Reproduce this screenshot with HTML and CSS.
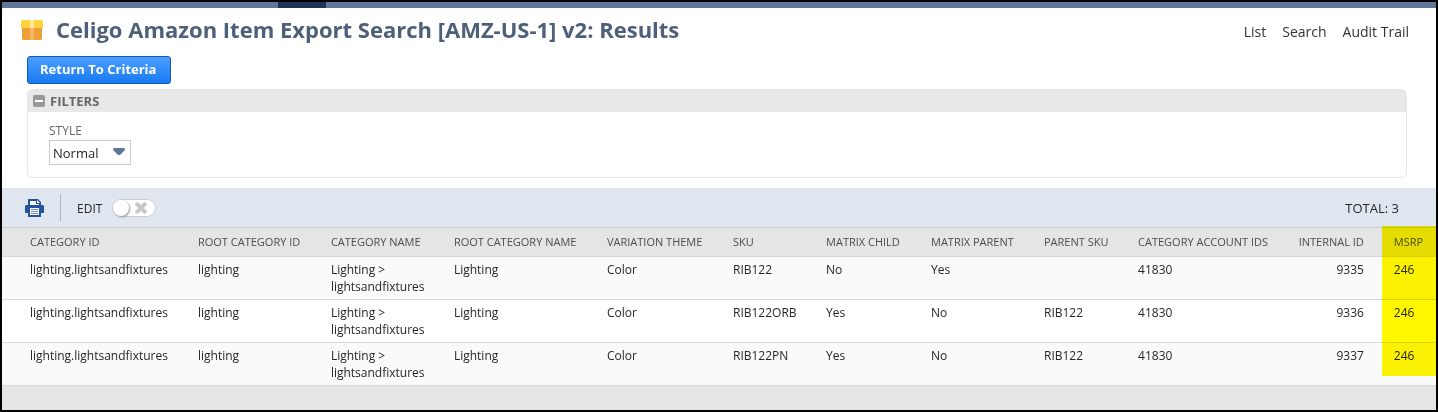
FILE: index.html
```html
<!DOCTYPE html>
<html lang="en">
<head>
<meta charset="utf-8">
<title>Celigo Amazon Item Export Search: Results</title>
<link rel="stylesheet" href="styles.css">
</head>
<body>
<div class="page">
  <div class="navbar"><div class="navbar-active"></div></div>
  <header class="page-header">
    <svg class="box-icon" width="22" height="20" viewBox="0 0 22 20" aria-hidden="true">
      <path d="M1 8h20v11l-1 1H2l-1-1z" fill="#ee9f37"/>
      <path d="M1 0h20l1 1v7H0V1z" fill="#ffd23e"/>
      <path d="M9 0h4v8H9z" fill="#ffe794"/>
      <path d="M9 8h4v12H9z" fill="#f3b766"/>
    </svg>
    <h1 class="title">Celigo Amazon Item Export Search [AMZ-US-1] v2: Results</h1>
    <nav class="links">
      <a href="#list">List</a>
      <a href="#search">Search</a>
      <a href="#audit">Audit Trail</a>
    </nav>
  </header>
  <div class="actions"><button class="primary" type="button">Return To Criteria</button></div>
  <section class="filters">
    <button class="filters-head" type="button" aria-expanded="true">
      <svg width="12" height="12" viewBox="0 0 12 12" aria-hidden="true"><rect width="12" height="12" rx="2" fill="#999"/><path d="M2 5h8v2H2z" fill="#fff"/></svg>
      FILTERS
    </button>
    <div class="filters-body">
      <label class="field-label" for="style">STYLE</label>
      <div class="select-wrap">
        <select id="style" class="select"><option>Normal</option></select>
        <svg class="select-arrow" width="12" height="8" viewBox="0 0 12 8" aria-hidden="true"><path d="M1 0h10l1 1v1L7 7H5L0 2V1z" fill="#607799"/></svg>
      </div>
    </div>
  </section>
  <div class="toolbar">
    <button class="print" type="button" aria-label="Print">
      <svg width="19" height="18" viewBox="0 0 19 18" aria-hidden="true">
        <path d="M3 0h10l3 3v3h2l1 1v7h-3v4H3v-4H0V7l1-1h2z" fill="#24559c"/>
        <path d="M5 2h6v3h3v1H5zM5 9h9v7H5z" fill="#fff"/>
        <path d="M12 1l3 3h-3z" fill="#fff"/>
        <path d="M6 10h7v1H6zM6 12h7v1H6zM6 14h7v1H6z" fill="#6d8fc0"/>
      </svg>
    </button>
    <div class="divider"></div>
    <label class="edit-label" for="edit">EDIT</label>
    <div class="toggle-wrap">
      <input id="edit" class="toggle" type="checkbox">
      <svg class="toggle-x" width="12" height="12" viewBox="0 0 12 12" aria-hidden="true"><path d="M1 1l10 10M11 1L1 11" stroke="#c8c8c8" stroke-width="4"/></svg>
    </div>
    <div class="total">TOTAL: 3</div>
  </div>
  <div class="results">
    <table class="grid">
      <colgroup>
        <col class="c-id"><col class="c-root"><col class="c-name"><col class="c-rootname"><col class="c-theme"><col class="c-sku"><col class="c-child"><col class="c-parent"><col class="c-psku"><col class="c-acct"><col class="c-int"><col class="c-msrp">
      </colgroup>
      <thead>
        <tr><th>CATEGORY ID</th><th>ROOT CATEGORY ID</th><th>CATEGORY NAME</th><th>ROOT CATEGORY NAME</th><th>VARIATION THEME</th><th>SKU</th><th>MATRIX CHILD</th><th>MATRIX PARENT</th><th>PARENT SKU</th><th>CATEGORY ACCOUNT IDS</th><th class="num">INTERNAL ID</th><th>MSRP</th></tr>
      </thead>
      <tbody>
        <tr><td>lighting.lightsandfixtures</td><td>lighting</td><td>Lighting &gt; lightsandfixtures</td><td>Lighting</td><td>Color</td><td>RIB122</td><td>No</td><td>Yes</td><td></td><td>41830</td><td class="num">9335</td><td>246</td></tr>
        <tr><td>lighting.lightsandfixtures</td><td>lighting</td><td>Lighting &gt; lightsandfixtures</td><td>Lighting</td><td>Color</td><td>RIB122ORB</td><td>Yes</td><td>No</td><td>RIB122</td><td>41830</td><td class="num">9336</td><td>246</td></tr>
        <tr><td>lighting.lightsandfixtures</td><td>lighting</td><td>Lighting &gt; lightsandfixtures</td><td>Lighting</td><td>Color</td><td>RIB122PN</td><td>Yes</td><td>No</td><td>RIB122</td><td>41830</td><td class="num">9337</td><td>246</td></tr>
      </tbody>
    </table>
    <div class="highlight"></div>
  </div>
  <div class="footer"></div>
</div>
</body>
</html>
```
FILE: styles.css
```css
* { box-sizing: border-box; }
body {
  margin: 0;
  background: #fff;
  color: #262626;
  font-family: "Open Sans", "Noto Sans", sans-serif;
  font-size: 13px;
}
.page {
  display: flex;
  flex-direction: column;
  min-height: 100vh;
  border: 2px solid #000;
}
.navbar {
  height: 6px;
  padding-left: 276px;
  background: #607799;
}
.navbar-active {
  width: 48px;
  height: 6px;
  background: #1f3257;
}
.page-header {
  display: flex;
  align-items: center;
  height: 44px;
  padding: 0 27px 0 19px;
}
.title {
  margin: 0 auto 0 13px;
  padding-bottom: 2px;
  color: #4d5f79;
  font-size: 22px;
  line-height: 30px;
  font-weight: 700;
}
.links { display: flex; gap: 16px; padding-top: 4px; }
.links a {
  color: #333;
  font-size: 14px;
  line-height: 20px;
  text-decoration: none;
}
.actions { padding: 4px 25px 5px; }
.primary {
  display: block;
  height: 28px;
  padding: 0 14px 2px 12px;
  border: 1px solid #125ab2;
  border-radius: 3px;
  background: linear-gradient(#4c9dff, #187bf2);
  color: #fff;
  font: 700 13px "Open Sans", sans-serif;
}
.filters {
  margin: 0 29px 10px 25px;
  border: 1px solid #e8e8e8;
  border-radius: 5px;
  overflow: hidden;
}
.filters-head {
  display: flex;
  align-items: center;
  gap: 5px;
  width: 100%;
  height: 22px;
  padding: 0 5px;
  border: 0;
  background: #e8e8e8;
  color: #666;
  font: 700 13px "Open Sans", sans-serif;
}
.filters-body { padding: 10px 21px 12px; }
.field-label {
  display: block;
  color: #666;
  font-size: 12px;
  line-height: 18px;
}
.select-wrap { position: relative; width: 82px; }
.select {
  display: block;
  width: 100%;
  height: 25px;
  padding: 0 3px;
  border: 1px solid #ccc;
  border-radius: 0;
  background: #fff;
  color: #262626;
  font: 13px "Open Sans", sans-serif;
  appearance: none;
}
.select-arrow {
  position: absolute;
  top: 8px;
  right: 6px;
  pointer-events: none;
}
.toolbar {
  display: flex;
  align-items: center;
  height: 39px;
  padding: 0 37px 0 23px;
  background: #e0e6ef;
}
.print {
  display: flex;
  padding: 0;
  border: 0;
  background: none;
}
.divider {
  width: 1px;
  height: 27px;
  margin: 0 16px;
  background: #b0b5bb;
}
.edit-label { padding-top: 2px; font-size: 12px; }
.toggle-wrap { position: relative; margin: 0 auto 0 10px; }
.toggle {
  display: block;
  width: 44px;
  height: 18px;
  margin: 0;
  border: 1px solid #ccc;
  border-radius: 9px;
  background: #fff;
  appearance: none;
}
.toggle::before {
  content: "";
  display: block;
  width: 16px;
  height: 16px;
  border-radius: 8px;
  background: #fff;
  box-shadow: 1px 1px 2px #999;
}
.toggle-x {
  position: absolute;
  top: 3px;
  left: 23px;
  pointer-events: none;
}
.results { position: relative; }
.grid {
  width: 100%;
  table-layout: fixed;
  border-collapse: separate;
  border-spacing: 0;
}
.c-id { width: 12.83%; }
.c-root { width: 9.27%; }
.c-name { width: 8.58%; }
.c-rootname { width: 10.67%; }
.c-theme { width: 8.79%; }
.c-sku { width: 6.49%; }
.c-child { width: 7.32%; }
.c-parent { width: 7.88%; }
.c-psku { width: 6.56%; }
.c-acct { width: 11.22%; }
.c-int { width: 6.62%; }
.c-msrp { width: 3.77%; }
.grid th, .grid td {
  padding: 0 0 0 12px;
  border-bottom: 1px solid #d9d9d9;
  text-align: left;
  vertical-align: top;
}
.grid th {
  height: 30px;
  border-top: 1px solid #ccc;
  background: #e5e5e5;
  color: #4d4d4d;
  font-size: 11px;
  font-weight: 400;
  line-height: 28px;
  white-space: nowrap;
}
.grid td {
  padding-top: 4px;
  padding-bottom: 4px;
  font-size: 12px;
  line-height: 17px;
}
.grid tbody tr:nth-child(odd) { background: #fafafa; }
.grid th:first-child, .grid td:first-child { padding-left: 28px; }
.grid th.num, .grid td.num { padding-right: 18px; padding-left: 0; text-align: right; }
.highlight {
  position: absolute;
  top: -1px;
  right: 0;
  bottom: 10px;
  width: 54px;
  background: #fff700;
  mix-blend-mode: multiply;
  pointer-events: none;
}
.footer {
  flex: 1 0 24px;
  background: #e5e5e5;
}
```
